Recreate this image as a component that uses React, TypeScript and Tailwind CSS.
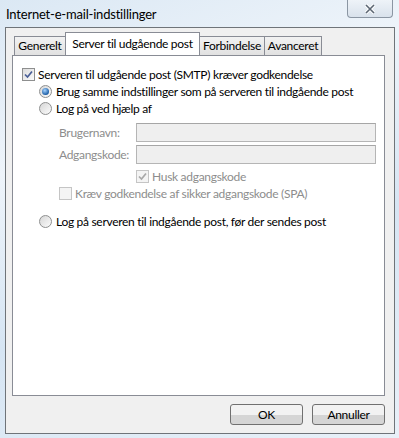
import React from "react";

const font = { fontFamily: 'Lato, "Noto Sans", sans-serif' };

function CheckBox({ checked, disabled }: { checked?: boolean; disabled?: boolean }) {
  return (
    <span
      className={`flex h-[13px] w-[13px] shrink-0 items-center justify-center border ${
        disabled ? "border-[#c5c5c5] bg-[#f4f4f4]" : "border-[#8e8f8f] bg-gradient-to-br from-[#dcdcdc] to-[#fbfbfb]"
      }`}
    >
      {checked && (
        <svg width="9" height="9" viewBox="0 0 9 9">
          <path
            d="M1 4.5 L3.5 7 L8 1.5"
            fill="none"
            stroke={disabled ? "#a8a8a8" : "#4a5f97"}
            strokeWidth="1.7"
          />
        </svg>
      )}
    </span>
  );
}

function Radio({ checked }: { checked?: boolean }) {
  return (
    <span className="flex h-[13px] w-[13px] shrink-0 items-center justify-center rounded-full border border-[#8e8f8f] bg-gradient-to-br from-[#d6d6d6] to-[#fcfcfc]">
      {checked && (
        <span className="h-[7px] w-[7px] rounded-full bg-[radial-gradient(circle_at_40%_35%,#a6d3ff,#1c5ea6_70%)]" />
      )}
    </span>
  );
}

const tabIdle =
  "flex h-[19px] items-center justify-center border border-b-0 border-[#898c95] bg-gradient-to-b from-[#f2f2f2] to-[#e1e1e1]";

function Field() {
  return <div className="h-[19px] w-[240px] shrink-0 border border-[#b5b5b5] border-t-[#a6a6a6] bg-[#efefef]" />;
}

export default function App() {
  return (
    <div
      className="h-[438px] w-[399px] overflow-hidden bg-[linear-gradient(160deg,#dbe8f4,#eef4fa_30%,#d6e5f3_60%,#e8f0f8)] text-[12px] tracking-[-0.3px] text-black"
      style={font}
    >
      {/* Title bar */}
      <div className="flex h-[27px] items-start justify-between">
        <span className="pl-[6px] pt-[5px] text-[13px] tracking-[-0.2px] text-black">Internet-e-mail-indstillinger</span>
        <div className="mr-[6px] flex h-[18px] w-[46px] items-center justify-center rounded-b-[4px] border border-t-0 border-[#8b96a3] bg-gradient-to-b from-[#eef3f8] to-[#d9e2ec]">
          <svg width="12" height="10" viewBox="0 0 12 10">
            <path d="M2 1 L10 9 M10 1 L2 9" stroke="#fff" strokeWidth="3.2" />
            <path d="M2 1 L10 9 M10 1 L2 9" stroke="#5b6673" strokeWidth="1.6" />
          </svg>
        </div>
      </div>

      {/* Dialog body */}
      <div className="ml-[5px] flex h-[407px] w-[390px] flex-col border border-[#6f7479] bg-[#f0f0f0]">
        <div className="ml-[6px] mt-[5px] flex h-[22px] items-end pl-[2px]">
          <div className={`${tabIdle} w-[52px]`}>Generelt</div>
          <div className="relative z-10 -mx-[1px] flex h-[23px] w-[135px] items-center justify-center border border-b-0 border-[#898c95] bg-white">
            Server til udgående post
          </div>
          <div className={`${tabIdle} w-[66px]`}>Forbindelse</div>
          <div className={`${tabIdle} w-[57px] border-l-0`}>Avanceret</div>
        </div>

        {/* Tab panel */}
        <div className="ml-[6px] h-[341px] w-[373px] border border-[#898c95] bg-white pl-[9px] pt-[10px]">
          <label className="flex h-[17px] items-center gap-[3px]">
            <CheckBox checked />
            <span>Serveren til udgående post (SMTP) kræver godkendelse</span>
          </label>

          <div className="pl-[17px]">
            <div className="flex h-[17px] items-center gap-[4px]">
              <Radio checked />
              <span className="whitespace-nowrap">Brug samme indstillinger som på serveren til indgående post</span>
            </div>
            <div className="flex h-[17px] items-center gap-[4px]">
              <Radio />
              <span>Log på ved hjælp af</span>
            </div>

            <div className="pl-[20px] text-[#8d8d8d]">
              <div className="mt-[6px] flex items-center">
                <span className="w-[77px] shrink-0">Brugernavn:</span>
                <Field />
              </div>
              <div className="mt-[3px] flex items-center">
                <span className="w-[77px] shrink-0">Adgangskode:</span>
                <Field />
              </div>
              <div className="ml-[77px] mt-[4px] flex h-[17px] items-center gap-[3px]">
                <CheckBox checked disabled />
                <span>Husk adgangskode</span>
              </div>
              <div className="flex h-[17px] items-center gap-[3px]">
                <CheckBox disabled />
                <span>Kræv godkendelse af sikker adgangskode (SPA)</span>
              </div>
            </div>

            <div className="mt-[11px] flex h-[17px] items-center gap-[4px]">
              <Radio />
              <span>Log på serveren til indgående post, før der sendes post</span>
            </div>
          </div>
        </div>

        {/* Buttons */}
        <div className="mr-[9px] mt-[8px] flex justify-end gap-[9px]">
          <button className="h-[21px] w-[73px] rounded-[3px] border border-[#707070] bg-gradient-to-b from-[#f2f2f2] from-50% to-[#d5d5d5] to-50%">
            OK
          </button>
          <button className="h-[21px] w-[73px] rounded-[3px] border border-[#707070] bg-gradient-to-b from-[#f2f2f2] from-50% to-[#d5d5d5] to-50%">
            Annuller
          </button>
        </div>
      </div>
    </div>
  );
}
